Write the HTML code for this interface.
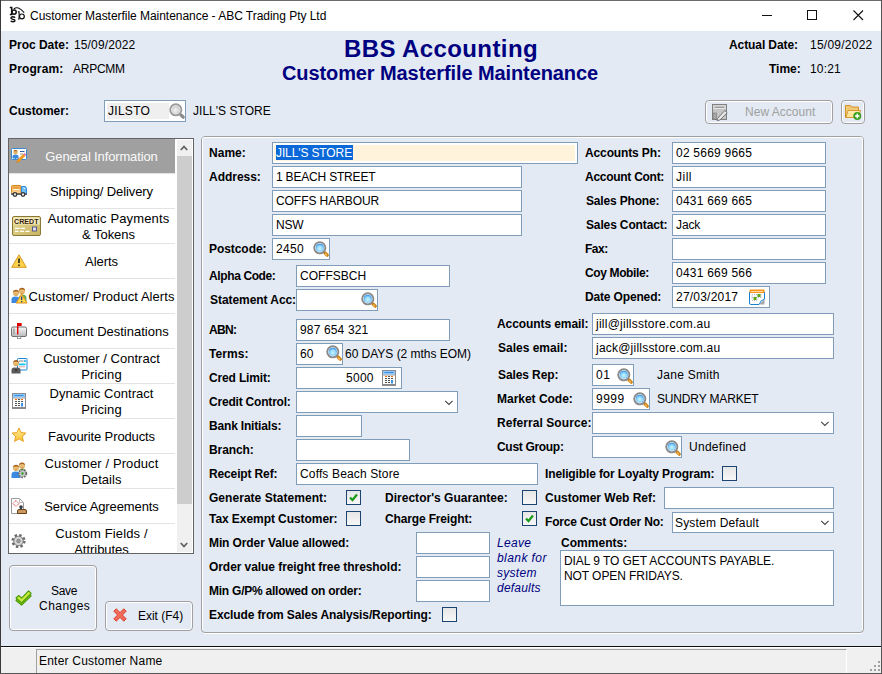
<!DOCTYPE html><html><head><meta charset="utf-8"><style>
html,body{margin:0;padding:0;}
body{width:882px;height:674px;position:relative;overflow:hidden;background:#e3eaf4;font-family:"Liberation Sans",sans-serif;color:#000;}
.t{position:absolute;white-space:nowrap;}
svg{overflow:visible}
</style></head><body>
<svg width="0" height="0" style="position:absolute"><defs>
<radialGradient id="mgr" cx="0.5" cy="0.6" r="0.55"><stop offset="0" stop-color="#c8f6ff"/><stop offset="0.65" stop-color="#90d4fa"/><stop offset="1" stop-color="#3a98ec"/></radialGradient>
<radialGradient id="mgg" cx="0.45" cy="0.55" r="0.6"><stop offset="0" stop-color="#f4f4f4"/><stop offset="1" stop-color="#c8c8c8"/></radialGradient>
<symbol id="mag" viewBox="0 0 16 16"><path d="M12 12 L14.2 14.2" stroke="#c88018" stroke-width="3.2" stroke-linecap="round"/><path d="M12.3 12.8 L13.6 14" stroke="#f8c050" stroke-width="1.2" stroke-linecap="round"/><circle cx="6.8" cy="6.8" r="5.6" fill="#fff" stroke="#8a8a8a" stroke-width="1.9"/><circle cx="6.8" cy="6.8" r="4.1" fill="url(#mgr)"/></symbol>
<symbol id="magg" viewBox="0 0 16 16"><path d="M12 12 L14.2 14.2" stroke="#8a8a8a" stroke-width="3.2" stroke-linecap="round"/><circle cx="6.8" cy="6.8" r="5.6" fill="#fff" stroke="#9a9a9a" stroke-width="1.9"/><circle cx="6.8" cy="6.8" r="4.1" fill="url(#mgg)"/></symbol>
</defs></svg>
<div style="position:absolute;left:0px;top:0px;width:882px;height:31px;background:#fff;"></div>
<div style="position:absolute;left:0px;top:0px;width:882px;height:1px;background:#6b6b6b;"></div>
<div style="position:absolute;left:0px;top:0px;width:1px;height:674px;background:#3a3a3a;"></div>
<div style="position:absolute;left:881px;top:0px;width:1px;height:674px;background:#555;"></div>
<div style="position:absolute;left:0px;top:673px;width:882px;height:1px;background:#555;"></div>
<svg style="position:absolute;left:0px;top:0px" width="30" height="30" viewBox="0 0 30 30"><g fill="none" stroke="#111"><path d="M9.8 7.6 H11.7 V14.4 H9.8" stroke-width="1.5"/><circle cx="14.1" cy="12.1" r="2.1" stroke-width="1.5"/><path d="M15.2 17.6 Q13 16.2 11.2 17.3 Q10.3 18.6 12.6 19.2 Q15.2 19.8 14.9 20.9 Q13.6 22.3 10.6 21.2" stroke-width="1.4"/><path d="M17.9 11.9 H19.1 V19 H17.9" stroke-width="1.1"/><circle cx="21.9" cy="16.4" r="2.4" stroke-width="1.2"/><path d="M13.8 9 Q17.8 5.2 24.2 12.6" stroke-width="1.1"/></g></svg>
<div class="t" style="left:30px;top:10px;font-size:12px;line-height:12px;letter-spacing:-0.035px;">Customer Masterfile Maintenance - ABC Trading Pty Ltd</div>
<div style="position:absolute;left:762px;top:15px;width:10px;height:1px;background:#111;"></div>
<div style="position:absolute;left:807px;top:10px;width:8px;height:8px;border:1px solid #111;"></div>
<svg style="position:absolute;left:853px;top:10px" width="11" height="11" viewBox="0 0 11 11"><path d="M0.5 0.5 L10 10 M10 0.5 L0.5 10" stroke="#111" stroke-width="1.1"/></svg>
<div class="t" style="left:9px;top:39px;font-size:12px;line-height:12px;font-weight:bold;letter-spacing:-0.011px;">Proc Date:</div>
<div class="t" style="left:74px;top:39px;font-size:12px;line-height:12px;letter-spacing:0.133px;">15/09/2022</div>
<div class="t" style="left:9px;top:63px;font-size:12px;line-height:12px;font-weight:bold;letter-spacing:0.129px;">Program:</div>
<div class="t" style="left:73px;top:63px;font-size:12px;line-height:12px;letter-spacing:-0.26px;">ARPCMM</div>
<div class="t" style="left:241px;top:37px;font-size:24px;line-height:24px;font-weight:bold;color:#000080;letter-spacing:0.4px;width:400px;text-align:center;">BBS Accounting</div>
<div class="t" style="left:190px;top:63px;font-size:20px;line-height:20px;font-weight:bold;color:#000080;letter-spacing:-0.093px;width:500px;text-align:center;">Customer Masterfile Maintenance</div>
<div class="t" style="left:729px;top:39px;font-size:12px;line-height:12px;font-weight:bold;letter-spacing:-0.091px;">Actual Date:</div>
<div class="t" style="left:810px;top:39px;font-size:12px;line-height:12px;letter-spacing:0.244px;">15/09/2022</div>
<div class="t" style="left:769px;top:63px;font-size:12px;line-height:12px;font-weight:bold;letter-spacing:-0.025px;">Time:</div>
<div class="t" style="left:810px;top:63px;font-size:12px;line-height:12px;letter-spacing:0.175px;">10:21</div>
<div class="t" style="left:9px;top:105px;font-size:12px;line-height:12px;font-weight:bold;letter-spacing:-0.012px;">Customer:</div>
<div style="position:absolute;left:104px;top:100px;width:80px;height:20px;border:1px solid #7f9db9;background:#fff;"></div>
<div style="position:absolute;left:107px;top:103px;width:62px;height:16px;background:#efefef;"></div>
<div class="t" style="left:108px;top:105px;font-size:12px;line-height:12px;letter-spacing:0.28px;">JILSTO</div>
<svg style="position:absolute;left:169px;top:103px" width="16" height="16" viewBox="0 0 16 16"><use href="#magg" width="16" height="16"/></svg>
<div class="t" style="left:193px;top:105px;font-size:12px;line-height:12px;letter-spacing:0.027px;">JILL'S STORE</div>
<div style="position:absolute;left:705px;top:100px;width:126px;height:22px;border:1px solid #a0a0a0;border-radius:4px;background:#e3eaf4;box-shadow:inset 0 0 0 1px #fff;"></div>
<svg style="position:absolute;left:712px;top:104px" width="16" height="16" viewBox="0 0 16 16"><rect x="0.5" y="0.5" width="14" height="15" fill="#c4c4c4" stroke="#808080"/><rect x="1.5" y="1.5" width="12" height="3.5" fill="#e8e8e8"/><rect x="2.5" y="2.5" width="10" height="1.5" fill="#9a9a9a"/><rect x="1" y="9" width="3.5" height="6" fill="#a8a8a8" stroke="#777" stroke-width="0.6"/><path d="M5.5 14.5 L12.8 6.5 L15.2 8.8 L8 16 L5 16.5 Z" fill="#e6e6e6" stroke="#6a6a6a" stroke-width="0.9"/></svg>
<div class="t" style="left:745px;top:106px;font-size:12px;line-height:12px;color:#a0a0a0;letter-spacing:0.02px;">New Account</div>
<div style="position:absolute;left:841px;top:100px;width:22px;height:22px;border:1px solid #a0a0a0;border-radius:4px;background:#e3eaf4;box-shadow:inset 0 0 0 1px #fff;"></div>
<svg style="position:absolute;left:845px;top:104px" width="16" height="16" viewBox="0 0 16 16"><path d="M0.5 1.5 H5.5 L6.8 3 H13.5 V13.5 H0.5 Z" fill="#f2c870" stroke="#d0902a"/><path d="M1 13.5 L3 6.5 H15.5 L13.5 13.5 Z" fill="#fde496" stroke="#d49a36"/><path d="M3.5 8h10" stroke="#fff3c0"/><circle cx="12.3" cy="12" r="3.7" fill="#3aa81e" stroke="#2a8a10" stroke-width="0.6"/><path d="M12.3 9.8 V14.2 M10.1 12 H14.5" stroke="#fff" stroke-width="1.5"/></svg>
<div style="position:absolute;left:8px;top:138px;width:184px;height:414px;border:1px solid #646464;background:#fff;"></div>
<div style="position:absolute;left:9px;top:139px;width:166px;height:34px;background:#a0a0a0;"></div>
<div style="position:absolute;left:9px;top:173px;width:166px;height:1px;background:#e3e3e3;"></div>
<div class="t" style="left:27px;top:150px;font-size:13px;line-height:13px;color:#fafafa;letter-spacing:-0.139px;width:149px;text-align:center;">General Information</div>
<div style="position:absolute;left:9px;top:208px;width:166px;height:1px;background:#e3e3e3;"></div>
<div class="t" style="left:27px;top:185px;font-size:13px;line-height:13px;letter-spacing:-0.1px;width:149px;text-align:center;">Shipping/ Delivery</div>
<div style="position:absolute;left:9px;top:243px;width:166px;height:1px;background:#e3e3e3;"></div>
<div class="t" style="left:41px;top:212px;font-size:13px;line-height:13px;letter-spacing:0.129px;width:135px;text-align:center;">Automatic Payments</div>
<div class="t" style="left:41px;top:228px;font-size:13px;line-height:13px;letter-spacing:-0.029px;width:135px;text-align:center;">&amp; Tokens</div>
<div style="position:absolute;left:9px;top:278px;width:166px;height:1px;background:#e3e3e3;"></div>
<div class="t" style="left:27px;top:255px;font-size:13px;line-height:13px;letter-spacing:-0.04px;width:149px;text-align:center;">Alerts</div>
<div style="position:absolute;left:9px;top:313px;width:166px;height:1px;background:#e3e3e3;"></div>
<div class="t" style="left:27px;top:290px;font-size:13px;line-height:13px;letter-spacing:0.061px;width:149px;text-align:center;">Customer/ Product Alerts</div>
<div style="position:absolute;left:9px;top:348px;width:166px;height:1px;background:#e3e3e3;"></div>
<div class="t" style="left:27px;top:325px;font-size:13px;line-height:13px;letter-spacing:-0.005px;width:149px;text-align:center;">Document Destinations</div>
<div style="position:absolute;left:9px;top:383px;width:166px;height:1px;background:#e3e3e3;"></div>
<div class="t" style="left:27px;top:352px;font-size:13px;line-height:13px;letter-spacing:0.017px;width:149px;text-align:center;">Customer / Contract</div>
<div class="t" style="left:27px;top:368px;font-size:13px;line-height:13px;letter-spacing:0.117px;width:149px;text-align:center;">Pricing</div>
<div style="position:absolute;left:9px;top:418px;width:166px;height:1px;background:#e3e3e3;"></div>
<div class="t" style="left:27px;top:387px;font-size:13px;line-height:13px;letter-spacing:0.04px;width:149px;text-align:center;">Dynamic Contract</div>
<div class="t" style="left:27px;top:403px;font-size:13px;line-height:13px;letter-spacing:0.117px;width:149px;text-align:center;">Pricing</div>
<div style="position:absolute;left:9px;top:453px;width:166px;height:1px;background:#e3e3e3;"></div>
<div class="t" style="left:27px;top:430px;font-size:13px;line-height:13px;letter-spacing:-0.124px;width:149px;text-align:center;">Favourite Products</div>
<div style="position:absolute;left:9px;top:488px;width:166px;height:1px;background:#e3e3e3;"></div>
<div class="t" style="left:27px;top:457px;font-size:13px;line-height:13px;letter-spacing:0.106px;width:149px;text-align:center;">Customer / Product</div>
<div class="t" style="left:27px;top:473px;font-size:13px;line-height:13px;letter-spacing:0.067px;width:149px;text-align:center;">Details</div>
<div style="position:absolute;left:9px;top:523px;width:166px;height:1px;background:#e3e3e3;"></div>
<div class="t" style="left:27px;top:500px;font-size:13px;line-height:13px;letter-spacing:-0.106px;width:149px;text-align:center;">Service Agreements</div>
<div class="t" style="left:27px;top:527px;font-size:13px;line-height:13px;letter-spacing:0.136px;width:149px;text-align:center;">Custom Fields /</div>
<div class="t" style="left:27px;top:543px;font-size:13px;line-height:13px;letter-spacing:-0.033px;width:149px;text-align:center;">Attributes</div>
<div style="position:absolute;left:9px;top:553px;width:184px;height:1px;background:#646464;"></div>
<div style="position:absolute;left:175px;top:139px;width:18px;height:414px;background:#fff;"></div>
<div style="position:absolute;left:177px;top:140px;width:15px;height:412px;background:#f0f0f0;"></div>
<div style="position:absolute;left:177px;top:156px;width:15px;height:348px;background:#cdcdcd;"></div>
<svg style="position:absolute;left:180px;top:145px" width="8" height="6" viewBox="0 0 8 6"><path d="M0.8 5 L4 1.5 L7.2 5" fill="none" stroke="#606060" stroke-width="1.8"/></svg>
<svg style="position:absolute;left:180px;top:542px" width="8" height="6" viewBox="0 0 8 6"><path d="M0.8 1 L4 4.5 L7.2 1" fill="none" stroke="#606060" stroke-width="1.8"/></svg>
<svg width="0" height="0" style="position:absolute"><defs><linearGradient id="skin" x1="0" y1="0" x2="0" y2="1"><stop offset="0" stop-color="#f8d890"/><stop offset="1" stop-color="#d8a050"/></linearGradient><linearGradient id="mbx" x1="0" y1="0" x2="0" y2="1"><stop offset="0" stop-color="#fafafa"/><stop offset="1" stop-color="#b8b8bc"/></linearGradient><linearGradient id="orng" x1="0" y1="0" x2="0" y2="1"><stop offset="0" stop-color="#f0a848"/><stop offset="1" stop-color="#ffd898"/></linearGradient><linearGradient id="gold" x1="0" y1="0" x2="1" y2="1"><stop offset="0" stop-color="#e8dc98"/><stop offset="1" stop-color="#c8b460"/></linearGradient><linearGradient id="star" x1="0" y1="0" x2="0" y2="1"><stop offset="0" stop-color="#fff0a0"/><stop offset="1" stop-color="#f8c030"/></linearGradient></defs></svg>
<svg style="position:absolute;left:11px;top:147px" width="16" height="16" viewBox="0 0 16 16"><rect x="0.5" y="1.5" width="15" height="11" rx="1" fill="#fff" stroke="#3a88d0"/><path d="M1.5 12 H4 L5 11 H7 L8 12" stroke="#3a88d0" fill="none"/><circle cx="4.5" cy="5" r="2.3" fill="url(#skin)"/><path d="M2.3 4.3 Q4.5 1.8 6.7 4.3" fill="#a05818"/><path d="M1.5 11 V9.5 Q1.5 7.5 4.5 7.5 Q7.5 7.5 7.5 9.5 V11 Z" fill="#3a88e0"/><path d="M9 4.5h4.5" stroke="#2a5aa8"/><path d="M9 7h3" stroke="#9a9a9a"/><path d="M5.8 15.5 L6.5 13 L12.5 7 L14.2 8.7 L8.2 14.7 Z" fill="#f4a020" stroke="#d88010" stroke-width="0.6"/><path d="M12.5 7 L13.6 5.9 L15.3 7.6 L14.2 8.7 Z" fill="#e868c8"/></svg>
<svg style="position:absolute;left:11px;top:184px" width="16" height="14" viewBox="0 0 16 14"><rect x="0.5" y="1.5" width="9.5" height="8" rx="1" fill="url(#orng)" stroke="#d88a20"/><path d="M2 4h6.5" stroke="#e08a30"/><path d="M2 5.5h6.5" stroke="#fff0d0"/><path d="M10.5 2.5 H14.5 L15.5 4.5 V9.5 H10.5 Z" fill="#70c0f8" stroke="#2a88e0"/><path d="M12.5 3.5 L14 5" stroke="#e8f8ff"/><rect x="0" y="9.3" width="16" height="1.6" fill="#50586a"/><circle cx="4" cy="10.5" r="1.8" fill="#e8e8e8" stroke="#383838" stroke-width="1.3"/><circle cx="12" cy="10.5" r="1.8" fill="#e8e8e8" stroke="#383838" stroke-width="1.3"/></svg>
<svg style="position:absolute;left:12px;top:216px" width="29" height="20" viewBox="0 0 29 20"><rect x="0.5" y="0.5" width="28" height="19" rx="1.5" fill="url(#gold)" stroke="#8a7838"/><rect x="1.5" y="1.5" width="26" height="7" fill="#f4ecc0"/><text x="2" y="8" font-family="Liberation Sans" font-weight="bold" font-size="8" fill="#3a2408" textLength="24.5" lengthAdjust="spacingAndGlyphs">CREDT</text><path d="M3 12.3h4.5M8.5 12.3h4.5M3 15.3h3.5M8 15.3h4M13.5 15.3h4" stroke="#fff" stroke-width="1.2"/><rect x="20.5" y="11" width="4" height="4" fill="#dcdcf4" stroke="#5a5a88"/></svg>
<svg style="position:absolute;left:11px;top:254px" width="16" height="14" viewBox="0 0 16 14"><path d="M8 0.8 L15.3 13.3 H0.7 Z" fill="#fcd24a" stroke="#d89a20" stroke-linejoin="round"/><path d="M8 4.5 V9" stroke="#222" stroke-width="1.6"/><rect x="7.2" y="10.5" width="1.6" height="1.6" fill="#222"/></svg>
<svg style="position:absolute;left:11px;top:287px" width="16" height="16" viewBox="0 0 16 16"><path d="M8 15.5 V11 Q8 7.5 11.5 7.5 Q15.5 7.5 15.5 11 V15.5 Z" fill="#6ab050"/><circle cx="11" cy="4.2" r="3" fill="url(#skin)"/><path d="M8 4 Q8 0.8 11 0.8 Q14 0.8 14 4 L13 2.8 Q11 2 9 2.8 Z" fill="#a86020"/><path d="M0.5 16 V12.5 Q0.5 9.5 4.5 9.5 Q8.5 9.5 8.5 12.5 V16 Z" fill="#3a88e0"/><circle cx="5" cy="6" r="3" fill="url(#skin)"/><path d="M2 6 Q2 2.8 5 2.8 Q8 2.8 8 6 L7 4.8 Q5 4 3 4.8 Z" fill="#a86020"/><path d="M10.6 7 L16 16 H5.2 Z" fill="#fcd84a" stroke="#e09020" stroke-linejoin="round"/><path d="M10.6 9.5 V13" stroke="#2a3a7a" stroke-width="1.3"/><rect x="10" y="14" width="1.3" height="1.2" fill="#2a3a7a"/></svg>
<svg style="position:absolute;left:11px;top:322px" width="16" height="17" viewBox="0 0 16 17"><rect x="0.5" y="5" width="15" height="9.5" rx="1.5" fill="url(#mbx)" stroke="#707070"/><rect x="2" y="6.5" width="1.8" height="6" fill="#a8a8a8"/><rect x="6" y="1" width="1.4" height="11.5" fill="#e00000"/><path d="M6 1 H10.5 Q11 2.5 10.5 4 H6 Z" fill="#e00000"/><rect x="6.3" y="14.5" width="3.5" height="2.2" fill="#fff" stroke="#777" stroke-width="0.7"/></svg>
<svg style="position:absolute;left:11px;top:357px" width="17" height="17" viewBox="0 0 17 17"><rect x="6.5" y="1.5" width="9.5" height="11.5" rx="0.8" fill="#fff" stroke="#1a88d8"/><path d="M8 4h4.5" stroke="#888"/><circle cx="14" cy="4" r="1" fill="#10b0e8"/><rect x="7.5" y="6.5" width="7" height="1.8" fill="#10c8f0"/><path d="M8 9.8h6" stroke="#e0a0a0"/><path d="M0.5 16.5 V13 Q0.5 10.3 5 10.3 Q9.5 10.3 9.5 13 V16.5 Z" fill="#5a5a5a"/><path d="M4 10.5 L5 12.5 L6 10.5 Z" fill="#fff"/><rect x="4.5" y="11" width="1" height="3" fill="#111"/><circle cx="5" cy="6.5" r="2.8" fill="url(#skin)"/><path d="M2 6.5 Q2 3 5 3 Q8 3 8 6.5 L7.2 5.2 Q5 4.3 2.8 5.2 Z" fill="#a86020"/></svg>
<svg style="position:absolute;left:12px;top:393px" width="14" height="16" viewBox="0 0 14 16"><rect x="0.5" y="0.5" width="13" height="15" fill="#fff" stroke="#8a8a8a"/><rect x="1" y="1" width="12" height="3.5" fill="#8ccaff"/><path d="M2.5 2.5h9" stroke="#3a8ae0"/><rect x="0" y="4.5" width="14" height="1" fill="#9a9a9a"/><path d="M3 6.5h2M9 6.5h2" stroke="#f06a10"/><path d="M6 6.5h2M3 8.5h2M6 8.5h2M9 8.5h2M3 10.5h2M6 10.5h2M3 12.5h2M6 12.5h2" stroke="#505050"/><rect x="9" y="10" width="2" height="3.5" fill="#3a90e8"/><rect x="0" y="14" width="14" height="2" fill="#8a8a8a"/></svg>
<svg style="position:absolute;left:11px;top:427px" width="16" height="16" viewBox="0 0 16 16"><path d="M8 1 L10.1 5.6 L15 6.1 L11.3 9.4 L12.4 14.4 L8 11.8 L3.6 14.4 L4.7 9.4 L1 6.1 L5.9 5.6 Z" fill="url(#star)" stroke="#e8a020" stroke-linejoin="round"/></svg>
<svg style="position:absolute;left:11px;top:462px" width="16" height="16" viewBox="0 0 16 16"><path d="M8 13 V10 Q8 6.5 11.5 6.5 Q15 6.5 15 10 V13 Z" fill="#6ab050"/><circle cx="11" cy="3.8" r="3" fill="url(#skin)"/><path d="M8 3.6 Q8 0.5 11 0.5 Q14 0.5 14 3.6 L13 2.4 Q11 1.6 9 2.4 Z" fill="#a86020"/><path d="M0.5 16 V12.5 Q0.5 9.5 4.5 9.5 Q9.5 9.5 9.5 12.5 V16 Z" fill="#3a88e0"/><circle cx="5" cy="6" r="3" fill="url(#skin)"/><path d="M2 6 Q2 2.8 5 2.8 Q8 2.8 8 6 L7 4.8 Q5 4 3 4.8 Z" fill="#a86020"/><circle cx="11.5" cy="11.5" r="3.8" fill="#c8c8c8" stroke="#686868" stroke-width="1.8" stroke-dasharray="1.6 1.1"/><circle cx="11.5" cy="11.5" r="1.2" fill="#30a020"/></svg>
<svg style="position:absolute;left:11px;top:498px" width="16" height="16" viewBox="0 0 16 16"><path d="M0.5 0.5 H8.5 L12.5 4.5 V15.5 H0.5 Z" fill="#fff" stroke="#9a9a9a"/><path d="M8.5 0.5 V4.5 H12.5" fill="none" stroke="#bbb"/><path d="M5 2.5 L8 5.5 L5 8.5 L2 5.5 Z" fill="none" stroke="#e02020" stroke-dasharray="1 0.8"/><circle cx="10" cy="9" r="1.8" fill="#383838"/><rect x="9" y="9" width="2" height="3" fill="#304068"/><path d="M6.5 15.5 V13 Q6.5 11.5 8 11.5 H14 Q15.5 11.5 15.5 13 V15.5 Z" fill="#c89860" stroke="#6a4010"/></svg>
<svg style="position:absolute;left:11px;top:533px" width="16" height="16" viewBox="0 0 16 16"><circle cx="7.5" cy="8" r="5.6" fill="#d4d4d4" stroke="#6c6c6c" stroke-width="3" stroke-dasharray="2.3 2.1"/><circle cx="7.5" cy="8" r="4.6" fill="#d8d8d8" stroke="#7a7a7a" stroke-width="0.8"/><circle cx="7.5" cy="8" r="1.9" fill="#999" stroke="#777" stroke-width="0.6"/></svg>
<div style="position:absolute;left:9px;top:565px;width:86px;height:64px;border:1px solid #a0a0a0;border-radius:4px;background:#e3eaf4;box-shadow:inset 0 0 0 1px #fff;"></div>
<svg style="position:absolute;left:15px;top:590px" width="17" height="17" viewBox="0 0 17 17"><path d="M1 10.5 L3.8 8 L6.6 10.6 L13.6 3.2 L16.2 5.8 L6.6 15.2 Z" fill="#8cc818" stroke="#4a9a08" stroke-width="1.1" stroke-linejoin="round"/><path d="M1 8 L3.8 5.5 L6.6 8.1 L13.6 0.8 L16.2 3.4 L6.6 12.8 Z" fill="#c4ea3c" stroke="#4a9a08" stroke-width="1.1" stroke-linejoin="round"/></svg>
<div class="t" style="left:39px;top:585px;font-size:12px;line-height:12px;letter-spacing:-0.3px;width:50px;text-align:center;">Save</div>
<div class="t" style="left:39px;top:600px;font-size:12px;line-height:12px;letter-spacing:0.467px;width:50px;text-align:center;">Changes</div>
<div style="position:absolute;left:105px;top:601px;width:86px;height:28px;border:1px solid #a0a0a0;border-radius:4px;background:#e3eaf4;box-shadow:inset 0 0 0 1px #fff;"></div>
<svg style="position:absolute;left:113px;top:608px" width="14" height="14" viewBox="0 0 14 14"><path d="M0.8 3.2 L3.2 0.8 L7 4.6 L10.8 0.8 L13.2 3.2 L9.4 7 L13.2 10.8 L10.8 13.2 L7 9.4 L3.2 13.2 L0.8 10.8 L4.6 7 Z" fill="#f26a58" stroke="#d8402e" stroke-width="1" stroke-linejoin="round"/></svg>
<div class="t" style="left:138px;top:610px;font-size:12px;line-height:12px;letter-spacing:-0.025px;">Exit (F4)</div>
<div style="position:absolute;left:1px;top:646px;width:880px;height:1px;background:#111;"></div>
<div style="position:absolute;left:1px;top:647px;width:880px;height:26px;background:#f0f0f0;"></div>
<div style="position:absolute;left:1px;top:647px;width:880px;height:1px;background:#fff;"></div>
<div style="position:absolute;left:36px;top:649px;width:809px;height:23px;border-left:1px solid #a0a0a0;border-top:1px solid #a0a0a0;border-right:1px solid #fff;"></div>
<div class="t" style="left:39px;top:655px;font-size:12px;line-height:12px;letter-spacing:0.217px;">Enter Customer Name</div>
<svg style="position:absolute;left:870px;top:661px" width="10" height="10" viewBox="0 0 10 10"><g fill="#a0a0a0"><rect x="8" y="0" width="2" height="2"/><rect x="4" y="4" width="2" height="2"/><rect x="8" y="4" width="2" height="2"/><rect x="0" y="8" width="2" height="2"/><rect x="4" y="8" width="2" height="2"/><rect x="8" y="8" width="2" height="2"/></g></svg>
<div style="position:absolute;left:204px;top:633px;width:658px;height:1px;background:#fff;"></div>
<div style="position:absolute;left:201px;top:136px;width:661px;height:495px;border:1px solid #a0a0a0;border-radius:4px;"></div>
<div style="position:absolute;left:202px;top:137px;width:659px;height:492px;border:1px solid #fff;border-bottom:0;border-radius:3px 3px 0 0;"></div>
<div class="t" style="left:209px;top:147px;font-size:12px;line-height:12px;font-weight:bold;letter-spacing:0.025px;">Name:</div>
<div style="position:absolute;left:272px;top:142px;width:304px;height:20px;border:1px solid #7f9db9;background:#fff;"></div>
<div style="position:absolute;left:274px;top:145px;width:301px;height:16px;background:#fff3dc;"></div>
<div style="position:absolute;left:276px;top:145px;width:77px;height:15px;background:#0a68d8;"></div>
<div class="t" style="left:276px;top:147px;font-size:12px;line-height:12px;color:#fff;letter-spacing:-0.118px;">JILL'S STORE</div>
<div class="t" style="left:209px;top:171px;font-size:12px;line-height:12px;font-weight:bold;letter-spacing:-0.029px;">Address:</div>
<div style="position:absolute;left:272px;top:166px;width:248px;height:20px;border:1px solid #7f9db9;background:#fff;"></div>
<div class="t" style="left:276px;top:171px;font-size:12px;line-height:12px;letter-spacing:-0.192px;">1 BEACH STREET</div>
<div style="position:absolute;left:272px;top:190px;width:248px;height:20px;border:1px solid #7f9db9;background:#fff;"></div>
<div class="t" style="left:276px;top:195px;font-size:12px;line-height:12px;letter-spacing:-0.067px;">COFFS HARBOUR</div>
<div style="position:absolute;left:272px;top:214px;width:248px;height:20px;border:1px solid #7f9db9;background:#fff;"></div>
<div class="t" style="left:276px;top:219px;font-size:12px;line-height:12px;letter-spacing:-0.15px;">NSW</div>
<div class="t" style="left:209px;top:243px;font-size:12px;line-height:12px;font-weight:bold;letter-spacing:-0.062px;">Postcode:</div>
<div style="position:absolute;left:272px;top:238px;width:56px;height:20px;border:1px solid #7f9db9;background:#fff;"></div>
<div class="t" style="left:276px;top:243px;font-size:12px;line-height:12px;letter-spacing:0.333px;">2450</div>
<svg style="position:absolute;left:313px;top:241px" width="16" height="16" viewBox="0 0 16 16"><use href="#mag"/></svg>
<div class="t" style="left:209px;top:270px;font-size:12px;line-height:12px;font-weight:bold;letter-spacing:-0.38px;">Alpha Code:</div>
<div style="position:absolute;left:296px;top:265px;width:152px;height:20px;border:1px solid #7f9db9;background:#fff;"></div>
<div class="t" style="left:300px;top:270px;font-size:12px;line-height:12px;letter-spacing:0.029px;">COFFSBCH</div>
<div class="t" style="left:210px;top:294px;font-size:12px;line-height:12px;font-weight:bold;letter-spacing:-0.062px;">Statement Acc:</div>
<div style="position:absolute;left:296px;top:289px;width:80px;height:20px;border:1px solid #7f9db9;background:#fff;"></div>
<svg style="position:absolute;left:361px;top:292px" width="16" height="16" viewBox="0 0 16 16"><use href="#mag"/></svg>
<div class="t" style="left:209px;top:324px;font-size:12px;line-height:12px;font-weight:bold;letter-spacing:-0.667px;">ABN:</div>
<div style="position:absolute;left:296px;top:319px;width:152px;height:20px;border:1px solid #7f9db9;background:#fff;"></div>
<div class="t" style="left:300px;top:324px;font-size:12px;line-height:12px;letter-spacing:0.15px;">987 654 321</div>
<div class="t" style="left:209px;top:348px;font-size:12px;line-height:12px;font-weight:bold;letter-spacing:0.06px;">Terms:</div>
<div style="position:absolute;left:296px;top:343px;width:45px;height:20px;border:1px solid #7f9db9;background:#fff;"></div>
<div class="t" style="left:300px;top:348px;font-size:12px;line-height:12px;letter-spacing:0.2px;">60</div>
<svg style="position:absolute;left:326px;top:345px" width="16" height="16" viewBox="0 0 16 16"><use href="#mag"/></svg>
<div class="t" style="left:345px;top:348px;font-size:12px;line-height:12px;letter-spacing:-0.021px;">60 DAYS (2 mths EOM)</div>
<div class="t" style="left:209px;top:372px;font-size:12px;line-height:12px;font-weight:bold;letter-spacing:-0.15px;">Cred Limit:</div>
<div style="position:absolute;left:296px;top:367px;width:104px;height:20px;border:1px solid #7f9db9;background:#fff;"></div>
<div class="t" style="left:346px;top:372px;font-size:12px;line-height:12px;letter-spacing:0.267px;">5000</div>
<svg style="position:absolute;left:382px;top:370px" width="14" height="16" viewBox="0 0 14 16"><rect x="0.5" y="0.5" width="13" height="15" fill="#fff" stroke="#8a8a8a"/><rect x="1" y="1" width="12" height="3.5" fill="#8ccaff"/><path d="M2.5 2.5h9" stroke="#3a8ae0"/><rect x="0" y="4.5" width="14" height="1" fill="#9a9a9a"/><path d="M3 6.5h2M9 6.5h2" stroke="#f06a10"/><path d="M6 6.5h2M3 8.5h2M6 8.5h2M9 8.5h2M3 10.5h2M6 10.5h2M3 12.5h2M6 12.5h2" stroke="#505050"/><rect x="9" y="10" width="2" height="3.5" fill="#3a90e8"/><rect x="0" y="14" width="14" height="2" fill="#8a8a8a"/></svg>
<div class="t" style="left:209px;top:396px;font-size:12px;line-height:12px;font-weight:bold;letter-spacing:-0.2px;">Credit Control:</div>
<div style="position:absolute;left:296px;top:391px;width:160px;height:20px;border:1px solid #7f9db9;background:#fff;"></div>
<svg style="position:absolute;left:444px;top:400px" width="10" height="6" viewBox="0 0 10 6"><path d="M1.2 0.8 L4.9 4.5 L8.6 0.8" fill="none" stroke="#444" stroke-width="1.1"/></svg>
<div class="t" style="left:209px;top:420px;font-size:12px;line-height:12px;font-weight:bold;letter-spacing:-0.177px;">Bank Initials:</div>
<div style="position:absolute;left:296px;top:415px;width:64px;height:20px;border:1px solid #7f9db9;background:#fff;"></div>
<div class="t" style="left:209px;top:444px;font-size:12px;line-height:12px;font-weight:bold;letter-spacing:-0.1px;">Branch:</div>
<div style="position:absolute;left:296px;top:439px;width:112px;height:20px;border:1px solid #7f9db9;background:#fff;"></div>
<div class="t" style="left:209px;top:468px;font-size:12px;line-height:12px;font-weight:bold;letter-spacing:-0.136px;">Receipt Ref:</div>
<div style="position:absolute;left:296px;top:463px;width:240px;height:20px;border:1px solid #7f9db9;background:#fff;"></div>
<div class="t" style="left:300px;top:468px;font-size:12px;line-height:12px;letter-spacing:0.144px;">Coffs Beach Store</div>
<div class="t" style="left:209px;top:492px;font-size:12px;line-height:12px;font-weight:bold;letter-spacing:0.039px;">Generate Statement:</div>
<div style="position:absolute;left:346px;top:490px;width:13px;height:13px;border:1px solid #1c4470;background:linear-gradient(#e6e6e6,#f7f7f7);"></div>
<svg style="position:absolute;left:349px;top:493px" width="9" height="9" viewBox="0 0 9 9"><path d="M1 4.5 L3.5 7 L8 1.5" fill="none" stroke="#1a9a1a" stroke-width="2.2"/></svg>
<div class="t" style="left:209px;top:513px;font-size:12px;line-height:12px;font-weight:bold;letter-spacing:-0.063px;">Tax Exempt Customer:</div>
<div style="position:absolute;left:346px;top:511px;width:13px;height:13px;border:1px solid #1c4470;background:linear-gradient(#e6e6e6,#f7f7f7);"></div>
<div class="t" style="left:385px;top:492px;font-size:12px;line-height:12px;font-weight:bold;letter-spacing:0.02px;">Director's Guarantee:</div>
<div style="position:absolute;left:522px;top:490px;width:13px;height:13px;border:1px solid #1c4470;background:linear-gradient(#e6e6e6,#f7f7f7);"></div>
<div class="t" style="left:385px;top:513px;font-size:12px;line-height:12px;font-weight:bold;letter-spacing:-0.15px;">Charge Freight:</div>
<div style="position:absolute;left:522px;top:511px;width:13px;height:13px;border:1px solid #1c4470;background:linear-gradient(#e6e6e6,#f7f7f7);"></div>
<svg style="position:absolute;left:525px;top:514px" width="9" height="9" viewBox="0 0 9 9"><path d="M1 4.5 L3.5 7 L8 1.5" fill="none" stroke="#1a9a1a" stroke-width="2.2"/></svg>
<div class="t" style="left:209px;top:537px;font-size:12px;line-height:12px;font-weight:bold;letter-spacing:-0.104px;">Min Order Value allowed:</div>
<div class="t" style="left:209px;top:561px;font-size:12px;line-height:12px;font-weight:bold;letter-spacing:-0.068px;">Order value freight free threshold:</div>
<div class="t" style="left:209px;top:585px;font-size:12px;line-height:12px;font-weight:bold;letter-spacing:-0.24px;">Min G/P% allowed on order:</div>
<div class="t" style="left:209px;top:609px;font-size:12px;line-height:12px;font-weight:bold;letter-spacing:-0.114px;">Exclude from Sales Analysis/Reporting:</div>
<div style="position:absolute;left:416px;top:532px;width:72px;height:20px;border:1px solid #7f9db9;background:#fff;"></div>
<div style="position:absolute;left:416px;top:556px;width:72px;height:20px;border:1px solid #7f9db9;background:#fff;"></div>
<div style="position:absolute;left:416px;top:580px;width:72px;height:20px;border:1px solid #7f9db9;background:#fff;"></div>
<div style="position:absolute;left:442px;top:607px;width:13px;height:13px;border:1px solid #1c4470;background:linear-gradient(#e6e6e6,#f7f7f7);"></div>
<div class="t" style="left:497px;top:537px;font-size:12px;line-height:12px;font-style:italic;color:#000080;letter-spacing:0.325px;">Leave</div>
<div class="t" style="left:497px;top:552px;font-size:12px;line-height:12px;font-style:italic;color:#000080;letter-spacing:0.425px;">blank for</div>
<div class="t" style="left:497px;top:567px;font-size:12px;line-height:12px;font-style:italic;color:#000080;letter-spacing:0.28px;">system</div>
<div class="t" style="left:497px;top:582px;font-size:12px;line-height:12px;font-style:italic;color:#000080;letter-spacing:0.214px;">defaults</div>
<div class="t" style="left:585px;top:147px;font-size:12px;line-height:12px;font-weight:bold;letter-spacing:-0.127px;">Accounts Ph:</div>
<div style="position:absolute;left:672px;top:142px;width:152px;height:20px;border:1px solid #7f9db9;background:#fff;"></div>
<div class="t" style="left:676px;top:147px;font-size:12px;line-height:12px;letter-spacing:0.227px;">02 5669 9665</div>
<div class="t" style="left:585px;top:171px;font-size:12px;line-height:12px;font-weight:bold;letter-spacing:-0.275px;">Account Cont:</div>
<div style="position:absolute;left:672px;top:166px;width:152px;height:20px;border:1px solid #7f9db9;background:#fff;"></div>
<div class="t" style="left:676px;top:171px;font-size:12px;line-height:12px;letter-spacing:0.5px;">Jill</div>
<div class="t" style="left:586px;top:195px;font-size:12px;line-height:12px;font-weight:bold;letter-spacing:-0.173px;">Sales Phone:</div>
<div style="position:absolute;left:672px;top:190px;width:152px;height:20px;border:1px solid #7f9db9;background:#fff;"></div>
<div class="t" style="left:676px;top:195px;font-size:12px;line-height:12px;letter-spacing:0.227px;">0431 669 665</div>
<div class="t" style="left:586px;top:219px;font-size:12px;line-height:12px;font-weight:bold;letter-spacing:-0.138px;">Sales Contact:</div>
<div style="position:absolute;left:672px;top:214px;width:152px;height:20px;border:1px solid #7f9db9;background:#fff;"></div>
<div class="t" style="left:676px;top:219px;font-size:12px;line-height:12px;letter-spacing:-0.1px;">Jack</div>
<div class="t" style="left:585px;top:243px;font-size:12px;line-height:12px;font-weight:bold;letter-spacing:-0.5px;">Fax:</div>
<div style="position:absolute;left:672px;top:238px;width:152px;height:20px;border:1px solid #7f9db9;background:#fff;"></div>
<div class="t" style="left:585px;top:267px;font-size:12px;line-height:12px;font-weight:bold;letter-spacing:-0.37px;">Coy Mobile:</div>
<div style="position:absolute;left:672px;top:262px;width:152px;height:20px;border:1px solid #7f9db9;background:#fff;"></div>
<div class="t" style="left:676px;top:267px;font-size:12px;line-height:12px;letter-spacing:0.227px;">0431 669 566</div>
<div class="t" style="left:585px;top:291px;font-size:12px;line-height:12px;font-weight:bold;letter-spacing:-0.155px;">Date Opened:</div>
<div style="position:absolute;left:672px;top:286px;width:96px;height:20px;border:1px solid #7f9db9;background:#fff;"></div>
<div class="t" style="left:676px;top:291px;font-size:12px;line-height:12px;letter-spacing:0.211px;">27/03/2017</div>
<svg style="position:absolute;left:749px;top:289px" width="16" height="16" viewBox="0 0 16 16"><path d="M0.5 3 V14 Q0.5 15.5 2 15.5 H10 L15.5 10 V3" fill="#fff" stroke="#1a80d0"/><rect x="0.5" y="0.5" width="15" height="3.5" rx="1.2" fill="#f89418"/><path d="M2 2.5h12" stroke="#ffd8a8"/><path d="M3 5.5 V11.5 M6 5.5 V11.5 M9 5.5 V11.5 M12 5.5 V8.5 M3 5.5 H13 M3 8.5 H13 M3 11.5 H9" stroke="#a8a8b8" stroke-width="0.8" stroke-dasharray="1 1"/><rect x="4.5" y="8" width="3" height="3" fill="#58a810"/><rect x="8.5" y="5" width="3" height="3" fill="#58a810"/><path d="M10 15.5 L15.5 10 L15.5 15.5 Z" fill="#a8a8a8"/><path d="M10.5 15 Q11 11 15 10.5" fill="#d8ecff" stroke="#1a80d0" stroke-width="0.8"/></svg>
<div class="t" style="left:497px;top:318px;font-size:12px;line-height:12px;font-weight:bold;letter-spacing:-0.086px;">Accounts email:</div>
<div style="position:absolute;left:592px;top:313px;width:240px;height:20px;border:1px solid #7f9db9;background:#fff;"></div>
<div class="t" style="left:596px;top:318px;font-size:12px;line-height:12px;letter-spacing:0.252px;">jill@jillsstore.com.au</div>
<div class="t" style="left:498px;top:342px;font-size:12px;line-height:12px;font-weight:bold;letter-spacing:0.0px;">Sales email:</div>
<div style="position:absolute;left:592px;top:337px;width:240px;height:20px;border:1px solid #7f9db9;background:#fff;"></div>
<div class="t" style="left:596px;top:342px;font-size:12px;line-height:12px;letter-spacing:0.219px;">jack@jillsstore.com.au</div>
<div class="t" style="left:498px;top:369px;font-size:12px;line-height:12px;font-weight:bold;letter-spacing:-0.1px;">Sales Rep:</div>
<div style="position:absolute;left:592px;top:364px;width:40px;height:20px;border:1px solid #7f9db9;background:#fff;"></div>
<div class="t" style="left:596px;top:369px;font-size:12px;line-height:12px;letter-spacing:0.5px;">01</div>
<svg style="position:absolute;left:617px;top:368px" width="16" height="16" viewBox="0 0 16 16"><use href="#mag"/></svg>
<div class="t" style="left:657px;top:369px;font-size:12px;line-height:12px;letter-spacing:0.278px;">Jane Smith</div>
<div class="t" style="left:497px;top:393px;font-size:12px;line-height:12px;font-weight:bold;letter-spacing:-0.018px;">Market Code:</div>
<div style="position:absolute;left:592px;top:388px;width:56px;height:20px;border:1px solid #7f9db9;background:#fff;"></div>
<div class="t" style="left:596px;top:393px;font-size:12px;line-height:12px;letter-spacing:0.467px;">9999</div>
<svg style="position:absolute;left:633px;top:392px" width="16" height="16" viewBox="0 0 16 16"><use href="#mag"/></svg>
<div class="t" style="left:657px;top:393px;font-size:12px;line-height:12px;letter-spacing:-0.158px;">SUNDRY MARKET</div>
<div class="t" style="left:497px;top:417px;font-size:12px;line-height:12px;font-weight:bold;letter-spacing:0.067px;">Referral Source:</div>
<div style="position:absolute;left:592px;top:412px;width:240px;height:20px;border:1px solid #7f9db9;background:#fff;"></div>
<svg style="position:absolute;left:820px;top:421px" width="10" height="6" viewBox="0 0 10 6"><path d="M1.2 0.8 L4.9 4.5 L8.6 0.8" fill="none" stroke="#444" stroke-width="1.1"/></svg>
<div class="t" style="left:497px;top:441px;font-size:12px;line-height:12px;font-weight:bold;letter-spacing:-0.31px;">Cust Group:</div>
<div style="position:absolute;left:592px;top:436px;width:88px;height:20px;border:1px solid #7f9db9;background:#fff;"></div>
<svg style="position:absolute;left:665px;top:440px" width="16" height="16" viewBox="0 0 16 16"><use href="#mag"/></svg>
<div class="t" style="left:689px;top:441px;font-size:12px;line-height:12px;letter-spacing:0.275px;">Undefined</div>
<div class="t" style="left:545px;top:468px;font-size:12px;line-height:12px;font-weight:bold;letter-spacing:-0.127px;">Ineligible for Loyalty Program:</div>
<div style="position:absolute;left:722px;top:466px;width:13px;height:13px;border:1px solid #1c4470;background:linear-gradient(#e6e6e6,#f7f7f7);"></div>
<div class="t" style="left:545px;top:492px;font-size:12px;line-height:12px;font-weight:bold;letter-spacing:-0.006px;">Customer Web Ref:</div>
<div style="position:absolute;left:664px;top:487px;width:168px;height:20px;border:1px solid #7f9db9;background:#fff;"></div>
<div class="t" style="left:545px;top:516px;font-size:12px;line-height:12px;font-weight:bold;letter-spacing:-0.168px;">Force Cust Order No:</div>
<div style="position:absolute;left:672px;top:512px;width:160px;height:19px;border:1px solid #7f9db9;background:#fff;"></div>
<div class="t" style="left:675px;top:517px;font-size:12px;line-height:12px;letter-spacing:0.185px;">System Default</div>
<svg style="position:absolute;left:820px;top:520px" width="10" height="6" viewBox="0 0 10 6"><path d="M1.2 0.8 L4.9 4.5 L8.6 0.8" fill="none" stroke="#444" stroke-width="1.1"/></svg>
<div class="t" style="left:561px;top:537px;font-size:12px;line-height:12px;font-weight:bold;letter-spacing:0.025px;">Comments:</div>
<div style="position:absolute;left:560px;top:550px;width:272px;height:54px;border:1px solid #7f9db9;background:#fff;"></div>
<div class="t" style="left:564px;top:555px;font-size:12px;line-height:12px;letter-spacing:-0.067px;">DIAL 9 TO GET ACCOUNTS PAYABLE.</div>
<div class="t" style="left:564px;top:570px;font-size:12px;line-height:12px;letter-spacing:-0.081px;">NOT OPEN FRIDAYS.</div>
</body></html>
